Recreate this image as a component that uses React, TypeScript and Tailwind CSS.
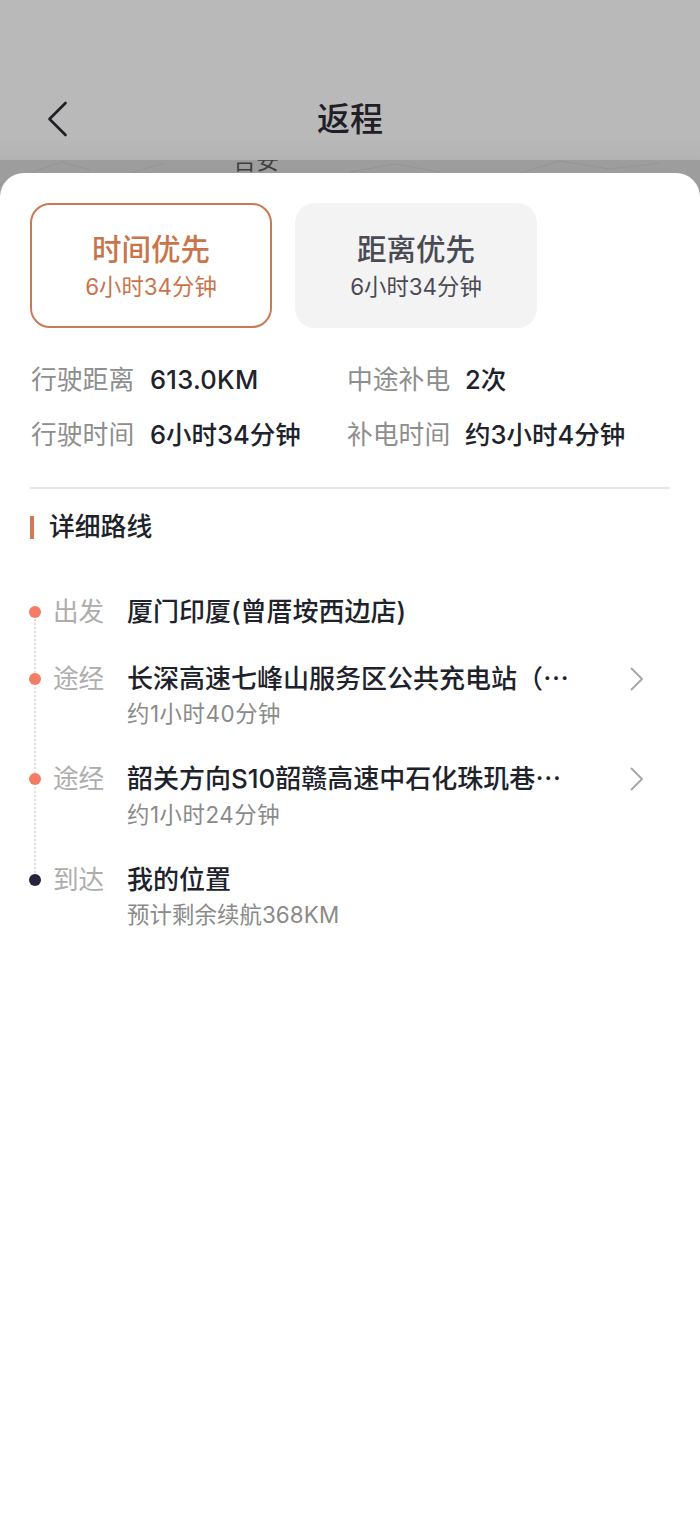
const font = { fontFamily: 'Inter, "Noto Sans CJK SC", sans-serif' };

function Back() {
  return (
    <svg width="22" height="36" viewBox="0 0 22 36" fill="none" className="absolute left-[47px] top-[101px]">
      <path d="M18.5 2 L2.5 18 L18.5 34" stroke="#1f1f24" strokeWidth="2.6" strokeLinecap="round" strokeLinejoin="round" />
    </svg>
  );
}

function Chevron() {
  return (
    <svg width="16" height="24" viewBox="0 0 16 24" fill="none" className="mt-[6px] shrink-0">
      <path d="M2.5 1.5 L13 12 L2.5 22.5" stroke="#a8a8a8" strokeWidth="2" strokeLinecap="round" strokeLinejoin="round" />
    </svg>
  );
}

function Stat({ label, value, w, valueClass }: { label: string; value: string; w: string; valueClass?: string }) {
  return (
    <div className="flex h-9 items-center">
      <span className={`${w} text-[25.8px] text-[#8e8e8e]`}>{label}</span>
      <span className={`text-[25.5px] font-medium text-[#20222b] ${valueClass ?? ""}`}>{value}</span>
    </div>
  );
}

function Route({ h, dot, label, name, sub, more, subClass }: { h: string; dot: string; label: string; name: string; sub?: string; more?: boolean; subClass?: string }) {
  return (
    <div className={`flex ${h}`}>
      <div className="flex h-9 w-[22px] items-center">
        <span className={`relative z-10 ml-[-1px] h-3 w-3 rounded-full ${dot}`} />
      </div>
      <span className="h-9 w-[75px] pl-px text-[25.6px] leading-9 text-[#adadad]">{label}</span>
      <div className="w-[502px]">
        <div className="h-9 whitespace-nowrap text-[26px] font-medium leading-9 text-[#20222b]">{name}</div>
        {sub && <div className={`h-[34px] text-[22.4px] leading-[34px] text-[#8a8a8a] ${subClass ?? ""}`}>{sub}</div>}
      </div>
      {more && <Chevron />}
    </div>
  );
}

export default function App() {
  return (
    <div style={font} className="flex h-[1540px] w-[700px] flex-col overflow-hidden bg-[#9d9d9d]">
      <header className="relative flex h-40 items-start justify-center bg-gradient-to-b from-[#b9b9b9] from-85% to-[#b3b3b3]">
        <Back />
        <h1 className="mt-24 text-[33px] font-medium leading-[46px] text-[#1f2027]">返程</h1>
      </header>
      <div className="relative h-[13px] overflow-hidden">
        <svg width="700" height="13" viewBox="0 0 700 13" fill="none" className="absolute left-0 top-0">
          <path d="M30 13 L62 2 L90 10 M130 13 L165 3 M350 12 L395 4 L440 12 M520 13 L560 1 L610 9 L660 3" stroke="#959595" strokeWidth="1" />
        </svg>
        <span className="absolute left-[233px] top-[-14px] text-[23px] leading-[30px] text-[#3f3f3f]">吉安</span>
      </div>
      <main className="flex-1 rounded-t-[24px] bg-white px-[30px] pt-[30px]">
        <div className="flex gap-[23px]">
          <div className="flex h-[125px] w-[242px] flex-col items-center rounded-[20px] border-2 border-[#c97a55] pt-6 text-[#c9744b]">
            <span className="text-[29.5px] font-medium leading-10">时间优先</span>
            <span className="mt-px text-[22.4px] leading-[34px]">6小时34分钟</span>
          </div>
          <div className="flex h-[125px] w-[242px] flex-col items-center rounded-[20px] bg-[#f3f3f4] pt-[26px] text-[#4a4b52]">
            <span className="text-[29.5px] font-medium leading-10">距离优先</span>
            <span className="mt-px text-[22.4px] leading-[34px]">6小时34分钟</span>
          </div>
        </div>

        <div className="mt-[34px] grid grid-cols-[316px_1fr] gap-y-[19px] pl-px">
          <Stat label="行驶距离" value="613.0KM" w="w-[119px]" valueClass="tracking-[0.3px]" />
          <Stat label="中途补电" value="2次" w="w-[118px]" />
          <Stat label="行驶时间" value="6小时34分钟" w="w-[119px]" />
          <Stat label="补电时间" value="约3小时4分钟" w="w-[118px]" />
        </div>

        <div className="mt-[34px] h-0.5 w-[640px] bg-[#e6e6e6]" />

        <div className="mt-5 flex h-9 items-center gap-[15px]">
          <span className="h-[23px] w-1 bg-[#cf7a52]" />
          <h2 className="text-[25.8px] font-medium text-[#20222b]">详细路线</h2>
        </div>

        <div className="relative mt-[49px]">
          <div className="absolute bottom-[56px] left-1 top-[18px] border-l-2 border-dotted border-[#e2e2e2]" />
          <Route h="h-[67px]" dot="bg-[#f47c64]" label="出发" name="厦门印厦(曾厝垵西边店)" />
          <Route h="h-[100px]" dot="bg-[#f47c64]" label="途经" name="长深高速七峰山服务区公共充电站（⋯" sub="约1小时40分钟" subClass="tracking-[0.55px]" more />
          <Route h="h-[101px]" dot="bg-[#f47c64]" label="途经" name="韶关方向S10韶赣高速中石化珠玑巷⋯" sub="约1小时24分钟" subClass="mt-px tracking-[0.55px]" more />
          <Route h="h-[70px]" dot="bg-[#25253a]" label="到达" name="我的位置" sub="预计剩余续航368KM" subClass="tracking-[0.1px]" />
        </div>
      </main>
    </div>
  );
}
